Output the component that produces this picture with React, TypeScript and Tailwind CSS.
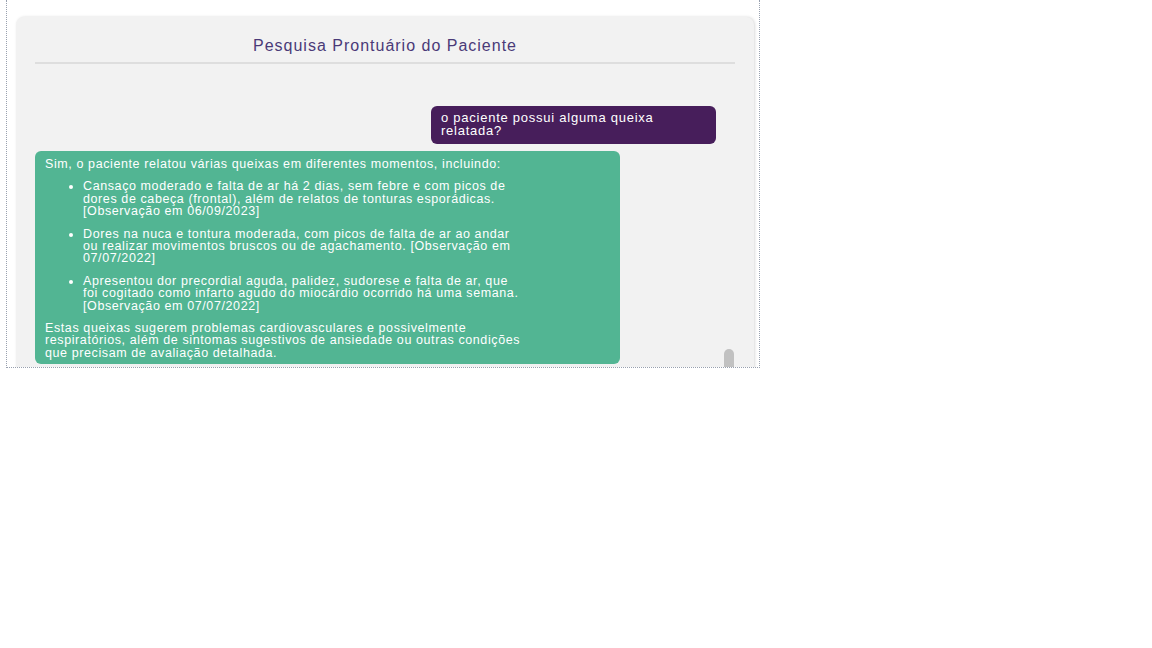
import React from 'react';

const queixas = [
  'Cansaço moderado e falta de ar há 2 dias, sem febre e com picos de dores de cabeça (frontal), além de relatos de tonturas esporádicas. [Observação em 06/09/2023]',
  'Dores na nuca e tontura moderada, com picos de falta de ar ao andar ou realizar movimentos bruscos ou de agachamento. [Observação em 07/07/2022]',
  'Apresentou dor precordial aguda, palidez, sudorese e falta de ar, que foi cogitado como infarto agudo do miocárdio ocorrido há uma semana. [Observação em 07/07/2022]',
];

const App: React.FC = () => {
  return (
    <div className="w-[1152px] h-[648px] bg-white font-['Liberation_Sans',Arial,sans-serif]">
      <div className="ml-[6px] w-[754px] h-[368px] border-x border-b border-dotted border-gray-400 overflow-hidden pl-[9px] pt-[17px]">
        <div className="relative w-[738px] h-[400px] bg-[#f2f2f2] rounded-t-lg shadow-[1px_0_3px_rgba(0,0,0,0.15)] px-[19px]">
          <div className="pt-[20px] pb-[7px] border-b-2 border-[#dedede] text-center">
            <h1 className="text-[16px] leading-[18px] tracking-[1px] text-[#4a3a78]">Pesquisa Prontuário do Paciente</h1>
          </div>

          <div className="flex flex-col pt-[42px] gap-[7px]">
            <div className="self-end mr-[19px] w-[285px] rounded-md bg-[#471e5b] px-[10px] pt-[6px] pb-[7px] text-[13px] leading-[12.5px] tracking-[0.75px] text-white">
              o paciente possui alguma queixa relatada?
            </div>

            <div className="w-[585px] rounded-md bg-[#52b593] px-[10px] pt-[7px] pb-[5px] text-[12.5px] leading-[12.4px] tracking-[0.6px] text-white">
              <div className="w-[482px]">
                <p>Sim, o paciente relatou várias queixas em diferentes momentos, incluindo:</p>
                <ul className="list-disc pl-[38px] my-[10px] space-y-[10px]">
                  {queixas.map((q) => (
                    <li key={q}>{q}</li>
                  ))}
                </ul>
                <p>
                  Estas queixas sugerem problemas cardiovasculares e possivelmente respiratórios, além de sintomas
                  sugestivos de ansiedade ou outras condições que precisam de avaliação detalhada.
                </p>
              </div>
            </div>
          </div>

          <div className="absolute left-[708px] top-[332px] w-[10px] h-[40px] rounded-full bg-[#c1c1c1]" />
        </div>
      </div>
    </div>
  );
};

export default App;
